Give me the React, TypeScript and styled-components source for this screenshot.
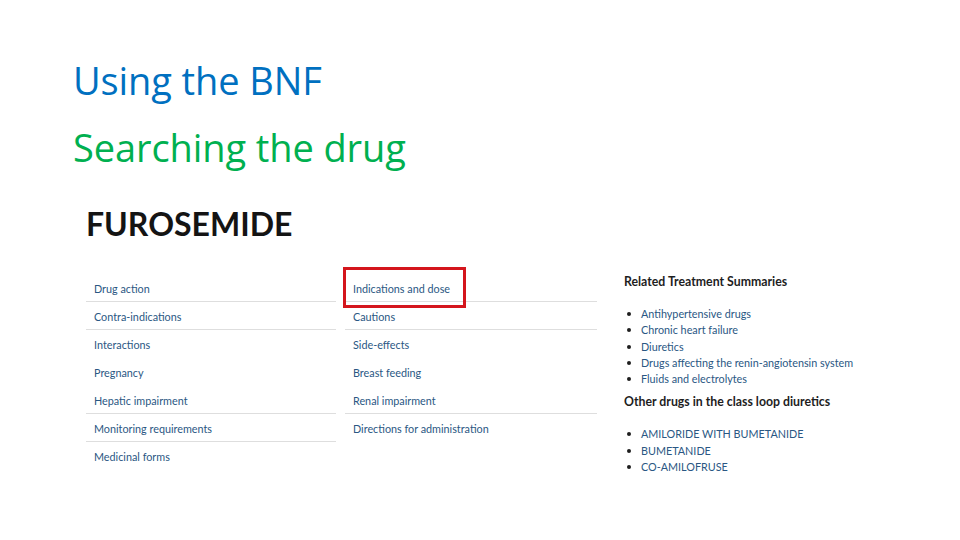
import React from "react";
import styled, { createGlobalStyle } from "styled-components";

const GlobalStyle = createGlobalStyle`
  html, body {
    margin: 0;
    padding: 0;
    background: #ffffff;
  }
  body {
    width: 960px;
    height: 540px;
    overflow: hidden;
  }
`;

interface Section {
  label: string;
  divider: boolean;
}

const leftSections: Section[] = [
  { label: "Drug action", divider: true },
  { label: "Contra-indications", divider: true },
  { label: "Interactions", divider: false },
  { label: "Pregnancy", divider: false },
  { label: "Hepatic impairment", divider: true },
  { label: "Monitoring requirements", divider: true },
  { label: "Medicinal forms", divider: false },
];

const rightSections: Section[] = [
  { label: "Indications and dose", divider: true },
  { label: "Cautions", divider: true },
  { label: "Side-effects", divider: false },
  { label: "Breast feeding", divider: false },
  { label: "Renal impairment", divider: true },
  { label: "Directions for administration", divider: false },
];

const summaries = [
  "Antihypertensive drugs",
  "Chronic heart failure",
  "Diuretics",
  "Drugs affecting the renin-angiotensin system",
  "Fluids and electrolytes",
];

const classDrugs = ["AMILORIDE WITH BUMETANIDE", "BUMETANIDE", "CO-AMILOFRUSE"];

function SectionColumn(props: { items: Section[]; highlight?: string }) {
  return (
    <Column>
      {props.items.map((item) => (
        <Row key={item.label} $divider={item.divider}>
          <RowLink>{item.label}</RowLink>
          {props.highlight === item.label && <Highlight />}
        </Row>
      ))}
    </Column>
  );
}

function BulletList(props: { items: string[] }) {
  return (
    <List>
      {props.items.map((item) => (
        <ListItem key={item}>{item}</ListItem>
      ))}
    </List>
  );
}

function App() {
  return (
    <Slide>
      <GlobalStyle />
      <Title $colour="#0070c0">Using the BNF</Title>
      <Title $colour="#00b050">Searching the drug</Title>
      <Monograph>
        <DrugName>FUROSEMIDE</DrugName>
        <Sections>
          <SectionColumn items={leftSections} />
          <SectionColumn items={rightSections} highlight="Indications and dose" />
          <Aside>
            <AsideHeading>Related Treatment Summaries</AsideHeading>
            <BulletList items={summaries} />
            <AsideHeading $gap={7}>Other drugs in the class loop diuretics</AsideHeading>
            <BulletList items={classDrugs} />
          </Aside>
        </Sections>
      </Monograph>
    </Slide>
  );
}

const Slide = styled.div`
  width: 960px;
  height: 540px;
  box-sizing: border-box;
  padding: 47px 0 0 73px;
  background: #ffffff;
`;

const Title = styled.h1<{ $colour: string }>`
  margin: 0;
  font-family: "Open Sans", "Noto Sans", sans-serif;
  font-weight: 500;
  font-size: 38px;
  line-height: 67px;
  letter-spacing: -0.1px;
  color: ${(p) => p.$colour};
`;

const Monograph = styled.div`
  margin: 23px 0 0 13px;
  font-family: Lato, "Open Sans", sans-serif;
`;

const DrugName = styled.h2`
  margin: 0;
  font-size: 32px;
  line-height: 40px;
  font-weight: 700;
  color: #141414;
`;

const Sections = styled.div`
  display: grid;
  grid-template-columns: 250px 252px 1fr;
  column-gap: 9px;
  margin-top: 30px;
  align-items: start;
`;

const Column = styled.div`
  display: flex;
  flex-direction: column;
`;

const Row = styled.div<{ $divider: boolean }>`
  position: relative;
  height: 27px;
  display: flex;
  align-items: center;
  padding-left: 8px;
  border-bottom: 1px solid ${(p) => (p.$divider ? "#dedede" : "transparent")};
`;

const RowLink = styled.span`
  font-size: 10.8px;
  color: #2a5783;
  padding-top: 2px;
`;

const Highlight = styled.div`
  position: absolute;
  left: -2px;
  top: -7px;
  width: 123px;
  height: 41px;
  box-sizing: border-box;
  border: 3px solid #d4161d;
  pointer-events: none;
`;

const Aside = styled.div`
  padding-left: 18px;
`;

const AsideHeading = styled.h3<{ $gap?: number }>`
  margin: ${(p) => p.$gap ?? 0}px 0 0;
  font-size: 12.3px;
  line-height: 16px;
  font-weight: 700;
  color: #1e1e1e;
`;

const List = styled.ul`
  list-style: none;
  margin: 16px 0 0;
  padding: 0 0 0 3px;
`;

const ListItem = styled.li`
  display: flex;
  align-items: center;
  font-size: 10.8px;
  line-height: 16.25px;
  color: #2a5783;

  &::before {
    content: "";
    width: 4px;
    height: 4px;
    border-radius: 50%;
    background: #1e1e1e;
    margin-right: 10px;
    flex-shrink: 0;
  }
`;

export default App;
